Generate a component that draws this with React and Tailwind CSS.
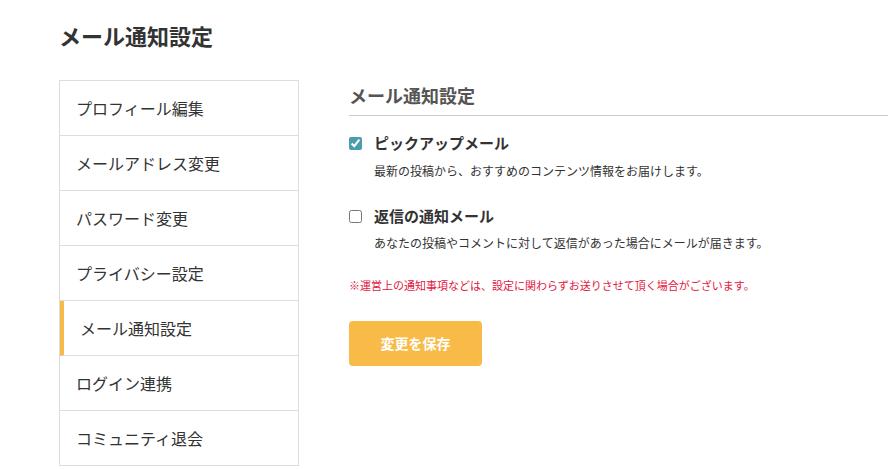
import React from "react";

const menu = [
  "プロフィール編集",
  "メールアドレス変更",
  "パスワード変更",
  "プライバシー設定",
  "メール通知設定",
  "ログイン連携",
  "コミュニティ退会",
];

export default function App() {
  return (
    <div
      className="min-h-screen bg-white pl-[59px] pt-[20px] text-[#333]"
      style={{ fontFamily: '"Noto Sans CJK JP", "Noto Sans", sans-serif' }}
    >
      <h1 className="text-[22px] leading-[30px] font-bold">メール通知設定</h1>

      <div className="mt-[30px] flex gap-[50px]">
        <div className="w-[240px] shrink-0 border-l border-r border-t border-[#dddddd]">
          {menu.map((item, i) => (
            <div
              key={item}
              className={
                i === 4
                  ? "h-[55px] border-b border-l-4 border-b-[#dddddd] border-l-[#f8bb48] pl-[16px] flex items-center text-[16px]"
                  : "h-[55px] border-b border-[#dddddd] pl-[16px] flex items-center text-[16px]"
              }
            >
              {item}
            </div>
          ))}
        </div>

        <div className="flex-1">
          <h2 className="text-[18px] leading-[30px] font-bold text-[#555] pb-[5px] border-b border-[#cccccc]">
            メール通知設定
          </h2>

          <label className="mt-[15px] flex items-center h-[24px]">
            <input type="checkbox" defaultChecked className="w-[13px] h-[13px] accent-[#4a9dac]" />
            <span className="ml-[12px] text-[15px] font-bold">ピックアップメール</span>
          </label>
          <p className="mt-[6px] ml-[25px] text-[12px] leading-[20px]">
            最新の投稿から、おすすめのコンテンツ情報をお届けします。
          </p>

          <label className="mt-[23px] flex items-center h-[24px]">
            <input type="checkbox" className="w-[13px] h-[13px] accent-[#4a9dac]" />
            <span className="ml-[12px] text-[15px] font-bold">返信の通知メール</span>
          </label>
          <p className="mt-[5px] ml-[25px] text-[12px] leading-[20px]">
            あなたの投稿やコメントに対して返信があった場合にメールが届きます。
          </p>

          <p className="mt-[22px] text-[11px] leading-[20px] text-[#e3163e]">
            ※運営上の通知事項などは、設定に関わらずお送りさせて頂く場合がございます。
          </p>

          <button className="mt-[26px] w-[133px] h-[45px] rounded-[4px] bg-[#f8bb48] text-white text-[14px] font-bold">
            変更を保存
          </button>
        </div>
      </div>
    </div>
  );
}
